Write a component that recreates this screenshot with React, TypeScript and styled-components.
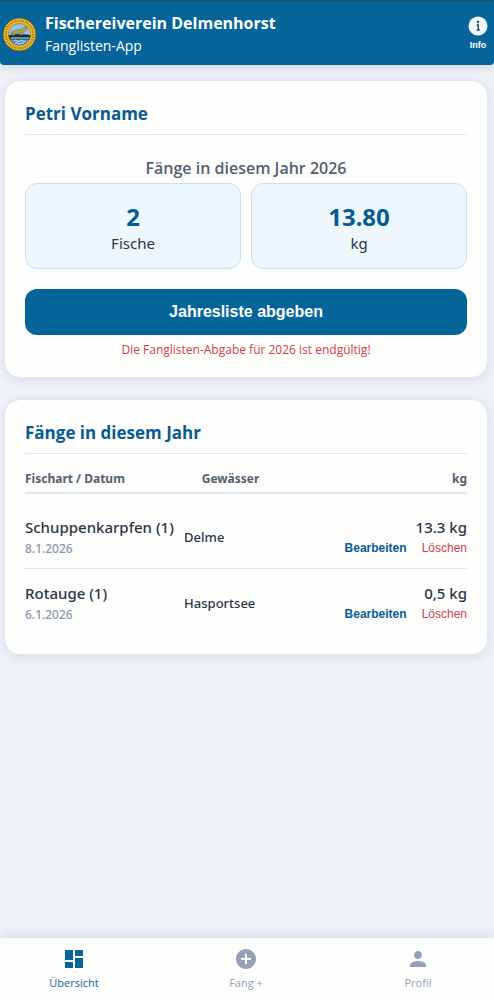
import React from "react";
import styled, { createGlobalStyle } from "styled-components";

const color = {
  brand: "#05659a",
  heading: "#075b92",
  ink: "#2a3546",
  slate: "#526071",
  muted: "#8c96a9",
  danger: "#cf4047",
  line: "#e1e6ee",
  card: "#fefefd",
};

const headingFont = `"Segoe UI", "Open Sans", "Noto Sans", sans-serif`;

const GlobalStyle = createGlobalStyle`
  *, *::before, *::after { box-sizing: border-box; }
  body {
    margin: 0;
    background: #eef1f6;
    color: ${color.ink};
    font-family: "Segoe UI", "Noto Sans", "Open Sans", sans-serif;
  }
  h1, h2, h3, p { margin: 0; }
  button { border: 0; background: none; padding: 0; cursor: pointer; }
`;

const Page = styled.div`
  min-height: 100vh;
  display: flex;
  flex-direction: column;
`;

const Header = styled.header`
  display: flex;
  align-items: center;
  gap: 8px;
  height: 65px;
  padding: 2px 6px 0 2px;
  background: ${color.brand};
  border-top: 1px solid #3c4a50;
  border-radius: 0 0 4px 4px;
  box-shadow: 0 2px 8px rgba(30, 60, 100, 0.16);
  color: #fff;
`;

const Brand = styled.div`
  flex: 1;
`;

const Title = styled.h1`
  font-family: ${headingFont};
  font-size: 16px;
  line-height: 24px;
  font-weight: 700;
`;

const Subtitle = styled.p`
  font-family: ${headingFont};
  font-size: 14px;
  line-height: 22px;
  font-weight: 400;
`;

const InfoButton = styled.button`
  display: flex;
  flex-direction: column;
  align-items: center;
  gap: 2px;
  color: #fff;
  font: 700 9px/14px "Liberation Sans", Arial, sans-serif;
`;

const Main = styled.main`
  flex: 1;
  display: flex;
  flex-direction: column;
  gap: 21px;
  padding: 15px 6px 21px 4px;
`;

const Card = styled.section`
  padding: 20px 20px 18px;
  background: ${color.card};
  border: 1px solid #e3e7f0;
  border-radius: 16px;
  box-shadow: 0 2px 8px rgba(40, 60, 110, 0.1);
`;

const CardTitle = styled.h2`
  padding-bottom: 8px;
  border-bottom: 1px solid ${color.line};
  color: ${color.heading};
  font-family: ${headingFont};
  font-size: 17px;
  line-height: 25px;
  font-weight: 700;
`;

const YearLabel = styled.h3`
  margin-top: 22px;
  color: ${color.slate};
  font-family: ${headingFont};
  font-size: 16px;
  line-height: 22px;
  font-weight: 600;
  text-align: center;
`;

const Stats = styled.div`
  display: grid;
  grid-template-columns: 1fr 1fr;
  gap: 10px;
  margin: 4px 0 20px;
`;

const Stat = styled.div`
  padding: 18px 12px 14px;
  background: #eef7fd;
  border: 1px solid #c2e3f4;
  border-radius: 12px;
  text-align: center;
`;

const StatValue = styled.p`
  color: ${color.heading};
  font-size: 24px;
  line-height: 30px;
  font-weight: 700;
`;

const StatLabel = styled.p`
  font-size: 15px;
  line-height: 22px;
`;

const SubmitButton = styled.button`
  display: block;
  width: 100%;
  height: 46px;
  border-radius: 12px;
  background: ${color.brand};
  color: #fff;
  font: 700 16px/20px "Liberation Sans", Arial, sans-serif;
`;

const Warning = styled.p`
  margin-top: 6px;
  color: ${color.danger};
  font-family: ${headingFont};
  font-size: 12px;
  line-height: 18px;
  text-align: center;
`;

const CatchTable = styled.table`
  width: 100%;
  table-layout: fixed;
  border-collapse: collapse;

  tbody tr:first-child td { padding-top: 21px; }
  tbody tr:last-child td { padding-bottom: 12px; border-bottom: 0; vertical-align: top; }
`;

type Align = "left" | "center" | "right";

const HeadCell = styled.th<{ $align: Align; $width?: string }>`
  width: ${(p) => p.$width ?? "auto"};
  padding: 14px 0 2px;
  border-bottom: 2px solid ${color.line};
  color: ${color.slate};
  font-size: 12px;
  line-height: 22px;
  font-weight: 700;
  text-align: ${(p) => p.$align};
`;

const Cell = styled.td<{ $align: Align }>`
  padding: 12px 0 10px;
  border-bottom: 1px solid ${color.line};
  text-align: ${(p) => p.$align};
  white-space: nowrap;
`;

const Strong = styled.div`
  font-size: 15px;
  line-height: 24px;
  font-weight: 500;
`;

const DateText = styled.div`
  color: ${color.muted};
  font-size: 12px;
  line-height: 19px;
  font-weight: 500;
`;

const Water = styled.div`
  padding: 12px 0 11px;
  font-size: 13px;
  line-height: 20px;
  font-weight: 500;
`;

const Actions = styled.div`
  display: flex;
  justify-content: flex-end;
  gap: 15px;
`;

const RowAction = styled.button<{ $danger?: boolean }>`
  color: ${(p) => (p.$danger ? color.danger : color.heading)};
  font: ${(p) => (p.$danger ? 400 : 700)} 12px/19px "Liberation Sans", Arial, sans-serif;
`;

const TabBar = styled.nav`
  position: sticky;
  bottom: 0;
  display: flex;
  justify-content: space-between;
  height: 62px;
  padding: 9px 40px 0 38px;
  background: ${color.card};
  box-shadow: 0 -2px 10px rgba(40, 60, 100, 0.12);
`;

const Tab = styled.button<{ $active?: boolean }>`
  width: 72px;
  display: flex;
  flex-direction: column;
  align-items: center;
  gap: 3px;
  color: ${(p) => (p.$active ? color.brand : "#94a1b8")};
  font-family: ${headingFont};
  font-size: 11px;
  line-height: 18px;
`;

const TabIcon = ({ d }: { d: string }) => (
  <svg width="24" height="24" viewBox="0 0 24 24" fill="currentColor" aria-hidden="true">
    <path d={d} />
  </svg>
);

const Logo = () => (
  <svg width="35" height="35" viewBox="0 0 70 70" aria-hidden="true">
    <defs>
      <clipPath id="sea"><circle cx="35" cy="35" r="22" /></clipPath>
    </defs>
    <circle cx="35" cy="35" r="33" fill="#f0b92a" stroke="#5f5b2b" strokeWidth="2" />
    <circle cx="35" cy="35" r="27.5" fill="none" stroke="#594d1c" strokeWidth="4" strokeDasharray="2.5 2.5" strokeOpacity=".6" />
    <g clipPath="url(#sea)">
      <rect width="70" height="37" fill="#9bc4dc" />
      <rect y="36" width="70" height="10" fill="#173f5b" />
      <rect y="45" width="70" height="25" fill="#4a90c6" />
      <path d="M14 37l8-3 30 1 6 3-6 4H19z" fill="#14303f" />
      <path d="M18 31q5-5 13-5l9-3q6-6 12-4l-2 4q-2 6-8 8l-2 5h-4l1-4-9 1-4 4h-4l3-5-5 1z" fill="#a8a35c" stroke="#606a45" strokeWidth="1" />
      <path d="M17 42h37M24 48q3-3 6 0t6 0 6 0 6 0M26 53q3-3 6 0t6 0 6 0" fill="none" stroke="#d5e9f3" strokeWidth="2" />
    </g>
    <circle cx="35" cy="35" r="22" fill="none" stroke="#6a6428" strokeWidth="1" />
  </svg>
);

const catches = [
  { fish: "Schuppenkarpfen (1)", date: "8.1.2026", water: "Delme", weight: "13.3 kg" },
  { fish: "Rotauge (1)", date: "6.1.2026", water: "Hasportsee", weight: "0,5 kg" },
];

export default function App() {
  return (
    <Page>
      <GlobalStyle />
      <Header>
        <Logo />
        <Brand>
          <Title>Fischereiverein Delmenhorst</Title>
          <Subtitle>Fanglisten-App</Subtitle>
        </Brand>
        <InfoButton type="button">
          <svg width="20" height="20" viewBox="0 0 20 20" aria-hidden="true">
            <circle cx="10" cy="10" r="9.5" fill="#f4f8fc" />
            <circle cx="10" cy="6" r="1.2" fill="#164f78" />
            <path d="M8.6 9H10.3V14M8.6 14H11.8" fill="none" stroke="#164f78" strokeWidth="1.5" />
          </svg>
          Info
        </InfoButton>
      </Header>

      <Main>
        <Card>
          <CardTitle>Petri Vorname</CardTitle>
          <YearLabel>Fänge in diesem Jahr 2026</YearLabel>
          <Stats>
            <Stat>
              <StatValue>2</StatValue>
              <StatLabel>Fische</StatLabel>
            </Stat>
            <Stat>
              <StatValue>13.80</StatValue>
              <StatLabel>kg</StatLabel>
            </Stat>
          </Stats>
          <SubmitButton type="button">Jahresliste abgeben</SubmitButton>
          <Warning>Die Fanglisten-Abgabe für 2026 ist endgültig!</Warning>
        </Card>

        <Card>
          <CardTitle>Fänge in diesem Jahr</CardTitle>
          <CatchTable>
            <thead>
              <tr>
                <HeadCell $align="left" $width="36%">Fischart / Datum</HeadCell>
                <HeadCell $align="center" $width="21%">Gewässer</HeadCell>
                <HeadCell $align="right">kg</HeadCell>
              </tr>
            </thead>
            <tbody>
              {catches.map((c) => (
                <tr key={c.fish}>
                  <Cell $align="left">
                    <Strong>{c.fish}</Strong>
                    <DateText>{c.date}</DateText>
                  </Cell>
                  <Cell $align="left">
                    <Water>{c.water}</Water>
                  </Cell>
                  <Cell $align="right">
                    <Strong>{c.weight}</Strong>
                    <Actions>
                      <RowAction type="button">Bearbeiten</RowAction>
                      <RowAction type="button" $danger>Löschen</RowAction>
                    </Actions>
                  </Cell>
                </tr>
              ))}
            </tbody>
          </CatchTable>
        </Card>
      </Main>

      <TabBar>
        <Tab type="button" $active>
          <TabIcon d="M3 13h8V3H3v10zm0 8h8v-6H3v6zm10 0h8V11h-8v10zm0-18v6h8V3h-8z" />
          Übersicht
        </Tab>
        <Tab type="button">
          <TabIcon d="M12 2C6.48 2 2 6.48 2 12s4.48 10 10 10 10-4.48 10-10S17.52 2 12 2zm5 11h-4v4h-2v-4H7v-2h4V7h2v4h4v2z" />
          Fang +
        </Tab>
        <Tab type="button">
          <TabIcon d="M12 12c2.21 0 4-1.79 4-4s-1.79-4-4-4-4 1.79-4 4 1.79 4 4 4zm0 2c-2.67 0-8 1.34-8 4v2h16v-2c0-2.66-5.33-4-8-4z" />
          Profil
        </Tab>
      </TabBar>
    </Page>
  );
}
